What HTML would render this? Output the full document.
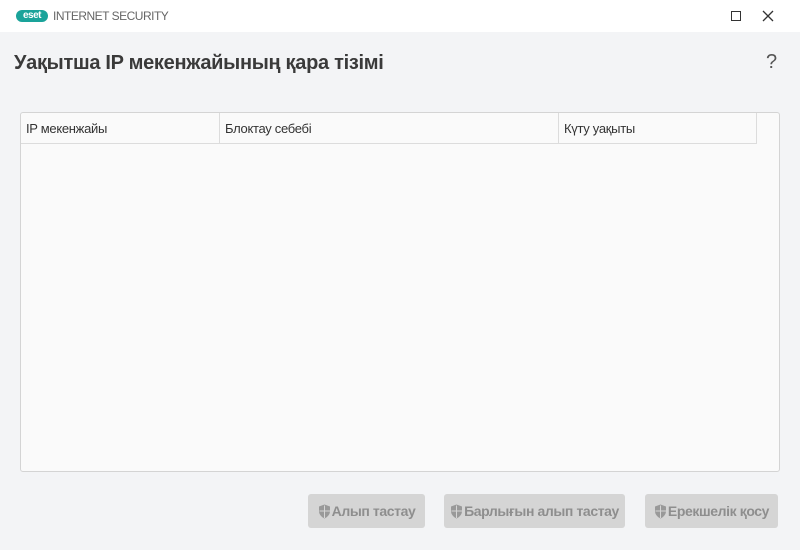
<!DOCTYPE html>
<html><head><meta charset="utf-8"><style>
*{margin:0;padding:0;box-sizing:border-box}
body{width:800px;height:550px;background:#f3f4f6;font-family:"Liberation Sans",sans-serif;position:relative;overflow:hidden;color:#333}
.tb{position:absolute;left:0;top:0;width:800px;height:32px;background:#fff}
.logo{position:absolute;left:16px;top:10px;width:32px;height:12px;background:#1aa39a;border-radius:6px;color:#fff;font-size:10px;font-weight:bold;line-height:12px;text-align:center;letter-spacing:-0.5px}
.brand{position:absolute;left:53px;top:9px;font-size:12px;color:#666;letter-spacing:-0.5px}
.max{position:absolute;left:731px;top:11px;width:10px;height:10px;border:1.3px solid #333}
h1{position:absolute;left:14px;top:52px;font-size:20px;font-weight:bold;color:#3a3a3a;letter-spacing:-0.3px}
.q{position:absolute;left:766px;top:51px;font-size:20px;color:#555}
.box{position:absolute;left:20px;top:112px;width:760px;height:360px;background:#fafafa;border:1px solid #d4d4d4;border-radius:3px}
.hd{position:absolute;left:0;top:0;width:736px;height:31px;border-bottom:1px solid #dcdcdc;font-size:13px;color:#333;letter-spacing:-0.3px}
.c{position:absolute;top:0;height:30px;line-height:31px;padding-left:5px;border-right:1px solid #dcdcdc}
.btn{position:absolute;top:494px;height:34px;background:#d5d5d5;border-radius:3px;color:#8e8e8e;font-size:14px;font-weight:bold;line-height:34px;text-align:center;letter-spacing:-0.4px}
.btn svg{vertical-align:-3px;margin-right:1px}
</style></head><body>
<div class="tb"><div class="logo">eset</div><div class="brand">INTERNET SECURITY</div><div class="max"></div>
<svg style="position:absolute;left:762px;top:10px" width="12" height="12"><path d="M1 1L11 11M11 1L1 11" stroke="#333" stroke-width="1.3"/></svg></div>
<h1>Уақытша IP мекенжайының қара тізімі</h1>
<div class="q">?</div>
<div class="box"><div class="hd">
<div class="c" style="left:0;width:199px">IP мекенжайы</div>
<div class="c" style="left:199px;width:339px">Блоктау себебі</div>
<div class="c" style="left:538px;width:198px">Күту уақыты</div>
</div></div>
<div class="btn" style="left:308px;width:117px"><svg width="13" height="15" viewBox="0 0 13 15"><path d="M6.5 0.5L12 2.5V7c0 3.5-2.5 6-5.5 7.5C3.5 13 1 10.5 1 7V2.5z" fill="#999"/><path d="M6.5 1.5V14M1.5 7H12" stroke="#d5d5d5" stroke-width="1"/></svg>Алып тастау</div>
<div class="btn" style="left:444px;width:181px"><svg width="13" height="15" viewBox="0 0 13 15"><path d="M6.5 0.5L12 2.5V7c0 3.5-2.5 6-5.5 7.5C3.5 13 1 10.5 1 7V2.5z" fill="#999"/><path d="M6.5 1.5V14M1.5 7H12" stroke="#d5d5d5" stroke-width="1"/></svg>Барлығын алып тастау</div>
<div class="btn" style="left:645px;width:133px"><svg width="13" height="15" viewBox="0 0 13 15"><path d="M6.5 0.5L12 2.5V7c0 3.5-2.5 6-5.5 7.5C3.5 13 1 10.5 1 7V2.5z" fill="#999"/><path d="M6.5 1.5V14M1.5 7H12" stroke="#d5d5d5" stroke-width="1"/></svg>Ерекшелік қосу</div>
</body></html>
